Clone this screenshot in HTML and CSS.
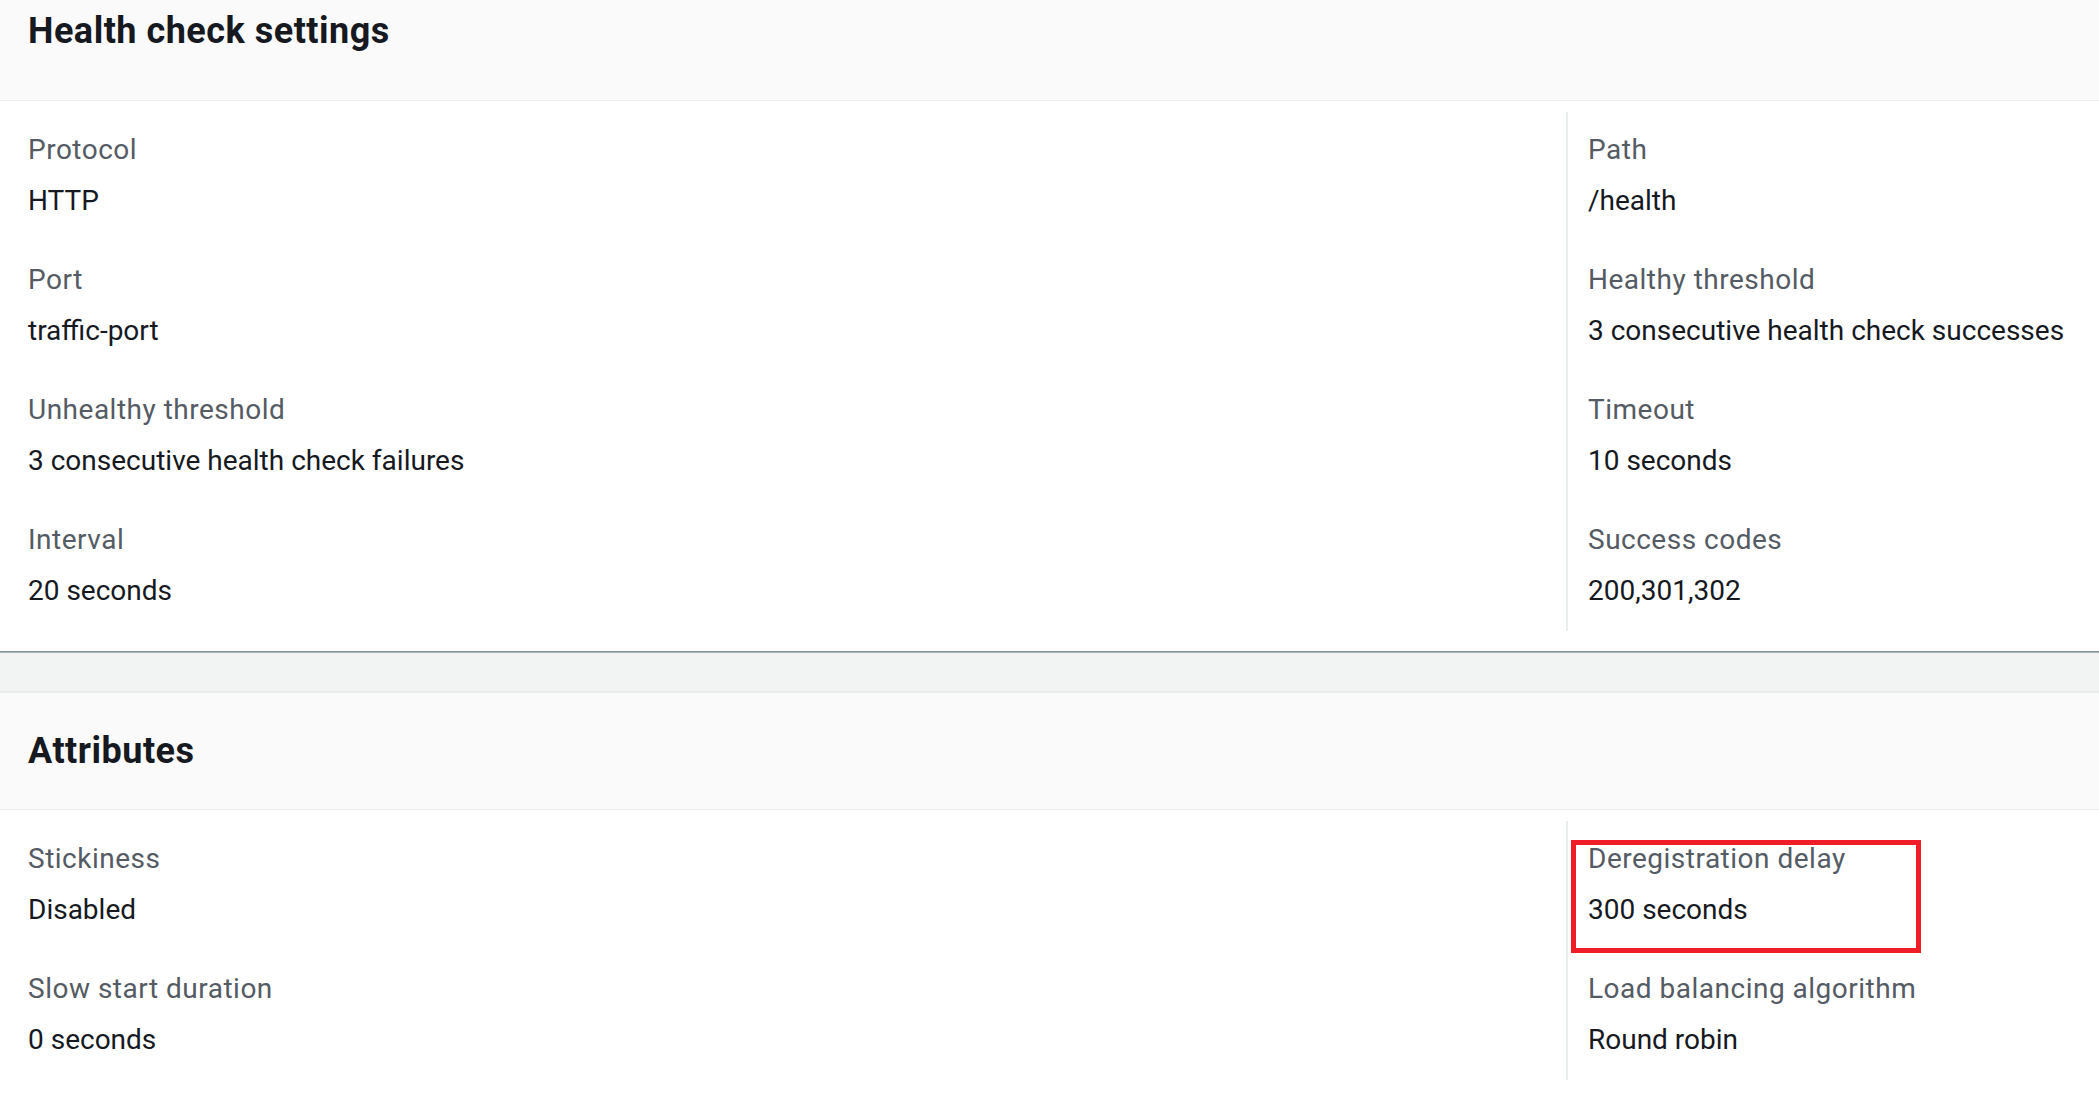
FILE: index.html
```html
<!DOCTYPE html>
<html lang="en">
<head>
<meta charset="utf-8">
<title>Target group details</title>
<link rel="stylesheet" href="styles.css">
</head>
<body>
  <section class="panel panel-health">
    <div class="panel-header header-top">
      <h2 class="panel-title">Health check settings</h2>
    </div>
    <div class="panel-body">
      <div class="col col-left">
        <div class="kv"><div class="kv-label">Protocol</div><div class="kv-value">HTTP</div></div>
        <div class="kv"><div class="kv-label">Port</div><div class="kv-value">traffic-port</div></div>
        <div class="kv"><div class="kv-label">Unhealthy threshold</div><div class="kv-value">3 consecutive health check failures</div></div>
        <div class="kv"><div class="kv-label">Interval</div><div class="kv-value">20 seconds</div></div>
      </div>
      <div class="col col-right">
        <div class="kv"><div class="kv-label">Path</div><div class="kv-value">/health</div></div>
        <div class="kv"><div class="kv-label">Healthy threshold</div><div class="kv-value">3 consecutive health check successes</div></div>
        <div class="kv"><div class="kv-label">Timeout</div><div class="kv-value">10 seconds</div></div>
        <div class="kv"><div class="kv-label">Success codes</div><div class="kv-value">200,301,302</div></div>
      </div>
    </div>
  </section>
  <div class="band"></div>
  <section class="panel panel-attrs">
    <div class="panel-header header-attrs">
      <h2 class="panel-title">Attributes</h2>
    </div>
    <div class="panel-body">
      <div class="col col-left">
        <div class="kv"><div class="kv-label">Stickiness</div><div class="kv-value">Disabled</div></div>
        <div class="kv"><div class="kv-label">Slow start duration</div><div class="kv-value">0 seconds</div></div>
      </div>
      <div class="col col-right">
        <div class="kv kv-marked"><div class="kv-label">Deregistration delay</div><div class="kv-value">300 seconds</div><span class="highlight-box"></span></div>
        <div class="kv"><div class="kv-label">Load balancing algorithm</div><div class="kv-value">Round robin</div></div>
      </div>
    </div>
  </section>
</body>
</html>
```

FILE: styles.css
```css
html, body {
  margin: 0;
  padding: 0;
  background: #ffffff;
}

body {
  font-family: Roboto, "Liberation Sans", sans-serif;
  color: #16191f;
  width: 2099px;
  min-height: 1099px;
}

.panel {
  background: #ffffff;
}

.panel-health {
  border-bottom: 1px solid #879596;
}

.panel-header {
  background: #fafafa;
  border-bottom: 1px solid #eaeded;
  padding-left: 28px;
  box-sizing: border-box;
}

.header-top {
  height: 101px;
  padding-top: 9px;
}

.header-attrs {
  border-top: 2px solid #eaeded;
  height: 119px;
  padding-top: 36px;
}

.panel-title {
  margin: 0;
  font-size: 36px;
  line-height: 44px;
  font-weight: 700;
  color: #16191f;
  letter-spacing: 0.5px;
}

.panel-body {
  display: grid;
  grid-template-columns: 1538px 1fr;
  padding: 11px 0 20px 28px;
}

.panel-attrs .panel-body {
  padding-bottom: 18px;
}

.col {
  display: flex;
  flex-direction: column;
  gap: 39px;
  padding: 18px 0 20px 0;
}

.col-right {
  border-left: 2px solid #eaeded;
  padding-left: 20px;
}

.kv {
  display: flex;
  flex-direction: column;
  gap: 11px;
}

.kv-label {
  font-size: 28px;
  line-height: 40px;
  color: #545b64;
  letter-spacing: 0.5px;
}

.kv-value {
  font-size: 28px;
  line-height: 40px;
  color: #16191f;
}

.kv-marked {
  position: relative;
}

.highlight-box {
  position: absolute;
  top: 1px;
  left: -17px;
  width: 350px;
  height: 113px;
  box-sizing: border-box;
  border: 5px solid #ee1d27;
  pointer-events: none;
}

.band {
  height: 38px;
  background: #f2f3f3;
  border-top: 1px solid #aab7b8;
}
```
